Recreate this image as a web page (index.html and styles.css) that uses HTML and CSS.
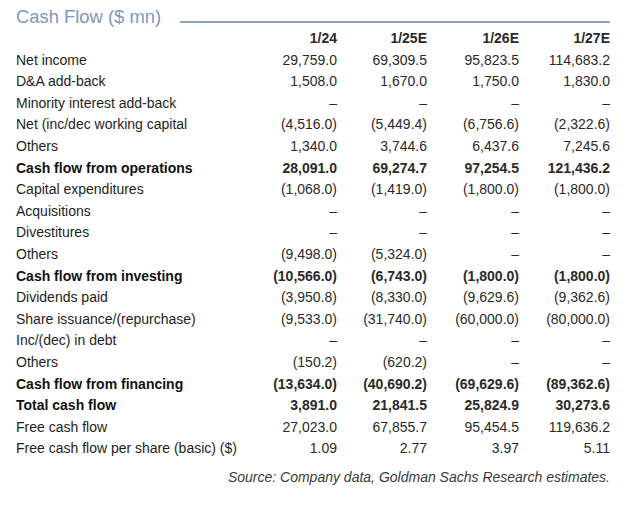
FILE: index.html
```html
<!DOCTYPE html>
<html>
<head>
<meta charset="utf-8">
<link rel="stylesheet" href="styles.css">
</head>
<body>
<div class="page">
  <div class="title-row">
    <h1 class="title">Cash Flow ($ mn)</h1>
    <div class="rule"></div>
  </div>
  <div class="table">
    <div class="row head"><span></span><span>1/24</span><span>1/25E</span><span>1/26E</span><span>1/27E</span></div>
    <div class="row"><span>Net income</span><span>29,759.0</span><span>69,309.5</span><span>95,823.5</span><span>114,683.2</span></div>
    <div class="row"><span>D&amp;A add-back</span><span>1,508.0</span><span>1,670.0</span><span>1,750.0</span><span>1,830.0</span></div>
    <div class="row"><span>Minority interest add-back</span><span>–</span><span>–</span><span>–</span><span>–</span></div>
    <div class="row"><span>Net (inc/dec working capital</span><span>(4,516.0)</span><span>(5,449.4)</span><span>(6,756.6)</span><span>(2,322.6)</span></div>
    <div class="row"><span>Others</span><span>1,340.0</span><span>3,744.6</span><span>6,437.6</span><span>7,245.6</span></div>
    <div class="row bold"><span>Cash flow from operations</span><span>28,091.0</span><span>69,274.7</span><span>97,254.5</span><span>121,436.2</span></div>
    <div class="row"><span>Capital expenditures</span><span>(1,068.0)</span><span>(1,419.0)</span><span>(1,800.0)</span><span>(1,800.0)</span></div>
    <div class="row"><span>Acquisitions</span><span>–</span><span>–</span><span>–</span><span>–</span></div>
    <div class="row"><span>Divestitures</span><span>–</span><span>–</span><span>–</span><span>–</span></div>
    <div class="row"><span>Others</span><span>(9,498.0)</span><span>(5,324.0)</span><span>–</span><span>–</span></div>
    <div class="row bold"><span>Cash flow from investing</span><span>(10,566.0)</span><span>(6,743.0)</span><span>(1,800.0)</span><span>(1,800.0)</span></div>
    <div class="row"><span>Dividends paid</span><span>(3,950.8)</span><span>(8,330.0)</span><span>(9,629.6)</span><span>(9,362.6)</span></div>
    <div class="row"><span>Share issuance/(repurchase)</span><span>(9,533.0)</span><span>(31,740.0)</span><span>(60,000.0)</span><span>(80,000.0)</span></div>
    <div class="row"><span>Inc/(dec) in debt</span><span>–</span><span>–</span><span>–</span><span>–</span></div>
    <div class="row"><span>Others</span><span>(150.2)</span><span>(620.2)</span><span>–</span><span>–</span></div>
    <div class="row bold"><span>Cash flow from financing</span><span>(13,634.0)</span><span>(40,690.2)</span><span>(69,629.6)</span><span>(89,362.6)</span></div>
    <div class="row bold"><span>Total cash flow</span><span>3,891.0</span><span>21,841.5</span><span>25,824.9</span><span>30,273.6</span></div>
    <div class="row"><span>Free cash flow</span><span>27,023.0</span><span>67,855.7</span><span>95,454.5</span><span>119,636.2</span></div>
    <div class="row"><span>Free cash flow per share (basic) ($)</span><span>1.09</span><span>2.77</span><span>3.97</span><span>5.11</span></div>
  </div>
  <p class="source">Source: Company data, Goldman Sachs Research estimates.</p>
</div>
</body>
</html>
```
FILE: styles.css
```css
html, body {
  margin: 0;
  padding: 0;
  background: #ffffff;
}
.page {
  width: 594px;
  padding-left: 16px;
  font-family: "Liberation Sans", Arial, sans-serif;
  color: #222;
}
.title-row {
  height: 28px;
  display: flex;
  align-items: flex-start;
}
.title {
  margin: 5px 0 0 0;
  font-size: 18.4px;
  font-weight: normal;
  line-height: 24px;
  color: #7d98be;
  white-space: nowrap;
}
.rule {
  flex: 1;
  margin-left: 19px;
  margin-top: 21px;
  height: 2px;
  background: #8aa4c6;
}
.row {
  display: grid;
  grid-template-columns: 231px 90px 90px 92px 91px;
  height: 21.6px;
  line-height: 21.6px;
  font-size: 14px;
  color: #2a2a2a;
}
.row span {
  text-align: right;
  white-space: nowrap;
}
.row span:first-child {
  text-align: left;
  color: #1e1e1e;
}
.head, .bold {
  font-weight: bold;
}
.bold span:first-child {
  color: #111;
}
.source {
  margin: 6px 0 0 0;
  text-align: right;
  font-style: italic;
  font-size: 14px;
  line-height: 22px;
  color: #3a3a3a;
}
```
